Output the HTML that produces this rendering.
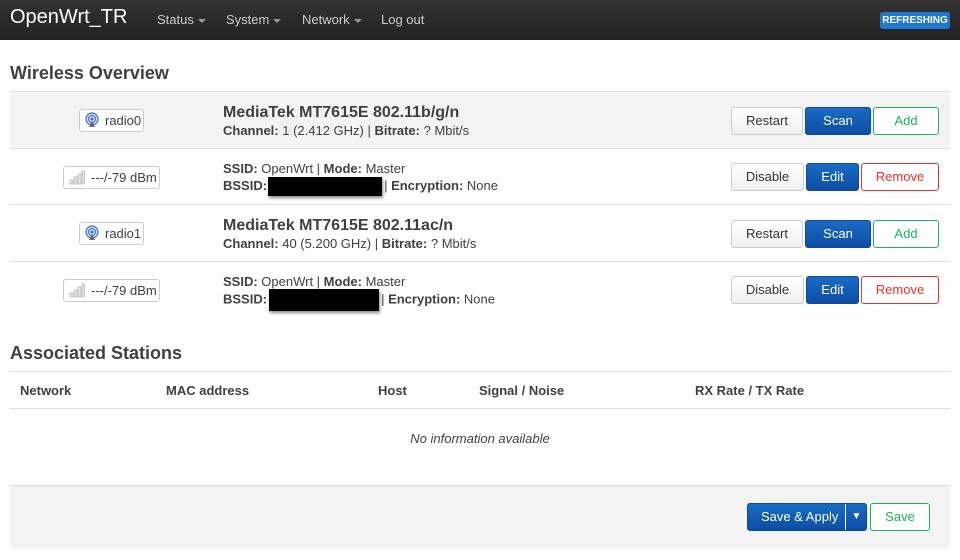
<!DOCTYPE html><html><head><style>
*{box-sizing:border-box;margin:0;padding:0}
body{width:960px;height:560px;background:#fff;font-family:"Liberation Sans",sans-serif;color:#404040;position:relative;overflow:hidden;font-size:13px}
.a{position:absolute;white-space:nowrap}
.nav{left:0;top:0;width:960px;height:40px;background:linear-gradient(#333,#222)}
.car{display:inline-block;border-top:4px solid #999;border-left:4px solid transparent;border-right:4px solid transparent;vertical-align:middle;margin-left:4px}
.row{left:10px;width:940px;border-bottom:1px solid #ddd}
.btn{position:absolute;height:28px;border-radius:3px;font-size:13px;text-align:center;line-height:26px;border:1px solid #ccc;background:linear-gradient(#fff,#f0f0f0);color:#333;white-space:nowrap}
.bl{background:linear-gradient(#1a6bc6,#0d4ea3);border-color:#0b4a9a;color:#fff}
.gr{border-color:#1bb35d;color:#1bb35d;background:#fff}
.rd{border-color:#e8332a;color:#e8332a;background:#fff}
.bd{position:absolute;height:23px;border:1px solid #ccc;border-radius:3px;font-size:13px;line-height:21px;padding:0 4px;background:#fff;color:#404040;white-space:nowrap}
.bd svg{vertical-align:-3px;margin-right:5px}
b{color:#404040}
.t{font-size:13px;color:#404040}
.h{font-size:16px;font-weight:bold;color:#404040}
.blk{display:inline-block;background:#000;vertical-align:middle;box-shadow:1px 2px 3px #888;margin:0 2px 0 1px}
</style></head><body>
<div class="a nav"></div>
<div class="a" style="left:10px;top:6px;font-size:20px;color:#fff">OpenWrt_TR</div>
<div class="a" style="left:157px;top:12px;color:#ccc;font-size:13px">Status<span class="car"></span></div>
<div class="a" style="left:226px;top:12px;color:#ccc;font-size:13px">System<span class="car"></span></div>
<div class="a" style="left:302px;top:12px;color:#ccc;font-size:13px">Network<span class="car"></span></div>
<div class="a" style="left:381px;top:12px;color:#ccc;font-size:13px">Log out</div>
<div class="a" style="left:880px;top:12px;width:70px;height:17px;background:#1f77d0;border-radius:3px;color:#fff;font-size:10px;font-weight:bold;text-align:center;line-height:17px">REFRESHING</div>

<div class="a" style="left:10px;top:63px;font-size:18px;font-weight:bold;color:#404040">Wireless Overview</div>
<div class="a row" style="top:91px;height:58px;background:#f3f3f3;border-top:1px solid #ddd"></div>
<div class="a row" style="top:149px;height:56px"></div>
<div class="a row" style="top:205px;height:57px"></div>

<div class="bd" style="left:79px;top:109px;width:65px"><svg width="16" height="16" viewBox="0 0 16 16"><circle cx="8" cy="7" r="6" fill="#cfdcf0" stroke="#3a6fc4" stroke-width="1.2"/><circle cx="8" cy="7" r="3.5" fill="none" stroke="#3a6fc4"/><circle cx="8" cy="7" r="1.5" fill="#3a6fc4"/><path d="M5 15 L8 9 L11 15Z" fill="#666"/></svg>radio0</div>
<div class="a h" style="left:223px;top:104px">MediaTek MT7615E 802.11b/g/n</div>
<div class="a t" style="left:223px;top:123px"><b>Channel:</b> 1 (2.412 GHz) | <b>Bitrate:</b> ? Mbit/s</div>
<div class="btn" style="left:731px;top:107px;width:72px">Restart</div>
<div class="btn bl" style="left:805px;top:107px;width:66px">Scan</div>
<div class="btn gr" style="left:873px;top:107px;width:66px">Add</div>

<div class="bd" style="left:63px;top:166px;width:97px"><svg width="18" height="16" viewBox="0 0 16 16" fill="#e4e4e4" stroke="#bbb" stroke-width=".8"><rect x="1" y="11" width="3" height="4"/><rect x="5" y="8" width="3" height="7"/><rect x="9" y="5" width="3" height="10"/><rect x="13" y="2" width="2.5" height="13"/></svg>---/-79 dBm</div>
<div class="a t" style="left:223px;top:161px"><b>SSID:</b> OpenWrt | <b>Mode:</b> Master</div>
<div class="a t" style="left:223px;top:176px;line-height:20px"><b>BSSID:</b><span class="blk" style="width:114px;height:19px"></span>| <b>Encryption:</b> None</div>
<div class="btn" style="left:731px;top:163px;width:73px">Disable</div>
<div class="btn bl" style="left:806px;top:163px;width:53px">Edit</div>
<div class="btn rd" style="left:861px;top:163px;width:78px">Remove</div>

<div class="bd" style="left:79px;top:222px;width:65px"><svg width="16" height="16" viewBox="0 0 16 16"><circle cx="8" cy="7" r="6" fill="#cfdcf0" stroke="#3a6fc4" stroke-width="1.2"/><circle cx="8" cy="7" r="3.5" fill="none" stroke="#3a6fc4"/><circle cx="8" cy="7" r="1.5" fill="#3a6fc4"/><path d="M5 15 L8 9 L11 15Z" fill="#666"/></svg>radio1</div>
<div class="a h" style="left:223px;top:217px">MediaTek MT7615E 802.11ac/n</div>
<div class="a t" style="left:223px;top:236px"><b>Channel:</b> 40 (5.200 GHz) | <b>Bitrate:</b> ? Mbit/s</div>
<div class="btn" style="left:731px;top:220px;width:72px">Restart</div>
<div class="btn bl" style="left:805px;top:220px;width:66px">Scan</div>
<div class="btn gr" style="left:873px;top:220px;width:66px">Add</div>

<div class="bd" style="left:63px;top:279px;width:97px"><svg width="18" height="16" viewBox="0 0 16 16" fill="#e4e4e4" stroke="#bbb" stroke-width=".8"><rect x="1" y="11" width="3" height="4"/><rect x="5" y="8" width="3" height="7"/><rect x="9" y="5" width="3" height="10"/><rect x="13" y="2" width="2.5" height="13"/></svg>---/-79 dBm</div>
<div class="a t" style="left:223px;top:274px"><b>SSID:</b> OpenWrt | <b>Mode:</b> Master</div>
<div class="a t" style="left:223px;top:289px;line-height:20px"><b>BSSID:</b><span class="blk" style="width:110px;height:22px;margin-left:2px"></span>| <b>Encryption:</b> None</div>
<div class="btn" style="left:731px;top:276px;width:73px">Disable</div>
<div class="btn bl" style="left:806px;top:276px;width:53px">Edit</div>
<div class="btn rd" style="left:861px;top:276px;width:78px">Remove</div>

<div class="a" style="left:10px;top:343px;font-size:18px;font-weight:bold;color:#404040">Associated Stations</div>
<div class="a row" style="top:371px;height:38px;border-top:1px solid #ddd"></div>
<div class="a t" style="left:20px;top:383px;font-weight:bold">Network</div>
<div class="a t" style="left:166px;top:383px;font-weight:bold">MAC address</div>
<div class="a t" style="left:378px;top:383px;font-weight:bold">Host</div>
<div class="a t" style="left:479px;top:383px;font-weight:bold">Signal / Noise</div>
<div class="a t" style="left:695px;top:383px;font-weight:bold">RX Rate / TX Rate</div>
<div class="a t" style="left:0;width:960px;text-align:center;top:431px;font-style:italic">No information available</div>

<div class="a" style="left:10px;top:485px;width:940px;height:64px;background:#f3f3f3;border-top:1px solid #ddd;border-radius:0 0 3px 3px"></div>
<div class="btn bl" style="left:747px;top:503px;width:120px;text-align:left;padding-left:13px">Save &amp; Apply<span style="position:absolute;left:97px;top:0;height:26px;border-left:1px solid #fff;width:22px;text-align:center;font-size:10px">&#9660;</span></div>
<div class="btn gr" style="left:870px;top:503px;width:60px">Save</div>
</body></html>
